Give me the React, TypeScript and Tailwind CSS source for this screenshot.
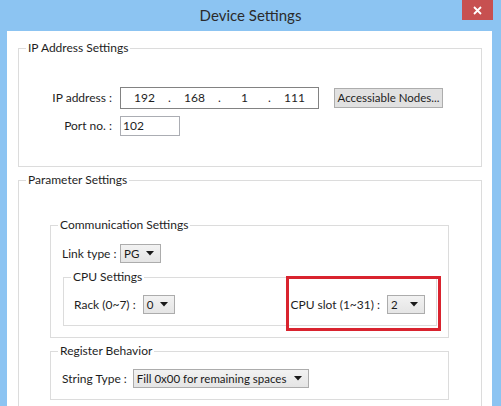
import React from "react";

// ─── Small pieces ─────────────────────────────────────────────────────────────
const font = "font-['Lato','Noto_Sans',sans-serif]";

function Arrow() {
  return (
    <svg width="8" height="5" viewBox="0 0 8 5" className="shrink-0">
      <path d="M0 0 H8 L4 4.5 Z" fill="#1a1a1a" />
    </svg>
  );
}

function Combo({ value, width }: { value: string; width: string }) {
  return (
    <div
      className={`flex h-[19px] items-center justify-between whitespace-nowrap border border-[#acacac] bg-gradient-to-b from-[#f2f2f2] to-[#e5e5e5] pl-[3px] pr-[6px] text-[11.5px] leading-none text-[#1a1a1a] ${width}`}
    >
      <span>{value}</span>
      <Arrow />
    </div>
  );
}

function Label({ children, className }: { children: React.ReactNode; className?: string }) {
  return (
    <span className={`whitespace-nowrap text-[12px] text-[#1e1e1e] ${className ?? ""}`}>{children}</span>
  );
}

function Group({
  title,
  className,
  children,
}: {
  title: string;
  className?: string;
  children: React.ReactNode;
}) {
  return (
    <fieldset className={`border border-[#dcdcdc] ${className ?? ""}`}>
      <legend className="ml-[7px] h-[16px] whitespace-nowrap px-[2px] text-[12px] leading-[16px] text-[#1e1e1e]">
        {title}
      </legend>
      {children}
    </fieldset>
  );
}

// ─── Main dialog ──────────────────────────────────────────────────────────────
export default function App() {
  const octets = ["192", "168", "1", "111"];

  return (
    <div className={`relative h-[406px] w-[501px] overflow-hidden bg-[#8cc4f2] ${font}`}>
      {/* title bar */}
      <div className="relative flex h-[31px] items-center justify-center">
        <span className="text-[15px] leading-none text-[#2b2b2b]">Device Settings</span>
        <div className="absolute right-[8px] top-0 flex h-[20px] w-[31px] items-center justify-center bg-[#c75050]">
          <svg width="9" height="9" viewBox="0 0 9 9">
            <path d="M1 1 L8 8 M8 1 L1 8" stroke="#fff" strokeWidth="1.8" />
          </svg>
        </div>
      </div>

      {/* client area */}
      <div className="ml-[7px] mr-[9px] h-[400px] bg-white pt-[9px]">
        <Group title="IP Address Settings" className="ml-[11px] mr-[10px] pb-[30px] pt-[31px]">
          <div className="flex items-center">
            <Label className="w-[94px] pr-[1px] text-right">IP address :</Label>
            <div className="ml-[7px] flex h-[22px] items-center border border-[#828282] text-[12px] text-[#1e1e1e]">
              {octets.map((o, i) => (
                <React.Fragment key={i}>
                  {i > 0 && <span className="w-[3px] text-center">.</span>}
                  <span className="w-[47px] text-center">{o}</span>
                </React.Fragment>
              ))}
            </div>
            <button className="ml-[15px] h-[20px] w-[109px] whitespace-nowrap border border-[#adadad] bg-[#e1e1e1] text-[11.5px] leading-none text-[#1e1e1e]">
              Accessiable Nodes...
            </button>
          </div>
          <div className="mt-[7px] flex items-center">
            <Label className="w-[94px] pr-[1px] text-right">Port no. :</Label>
            <div className="ml-[7px] flex h-[20px] w-[60px] items-center border border-[#abadb3] pl-[2px] text-[12px] text-[#1e1e1e]">
              102
            </div>
          </div>
        </Group>

        <Group title="Parameter Settings" className="ml-[11px] mr-[10px] mt-[5px] pb-[20px]">
          <Group title="Communication Settings" className="ml-[31px] mr-[32px] mt-[29px] pb-[11px]">
            <div className="flex items-center pl-[11px] pt-[11px]">
              <Label className="w-[58px]">Link type :</Label>
              <Combo value="PG" width="w-[41px]" />
            </div>
            <Group title="CPU Settings" className="ml-[12px] mr-[11px] mt-[6px] pb-[11px]">
              <div className="flex items-center justify-between pl-[10px] pr-[11px] pt-[10px]">
                <div className="flex items-center">
                  <Label>Rack (0~7) :</Label>
                  <div className="ml-[7px]">
                    <Combo value="0" width="w-[32px]" />
                  </div>
                </div>
                <div className="flex items-center">
                  <Label>CPU slot (1~31) :</Label>
                  <div className="ml-[7px]">
                    <Combo value="2" width="w-[38px]" />
                  </div>
                </div>
              </div>
            </Group>
          </Group>

          <Group title="Register Behavior" className="ml-[31px] mr-[32px] mt-[5px] pb-[11px]">
            <div className="flex items-center pl-[11px] pt-[10px]">
              <Label>String Type :</Label>
              <div className="ml-[6px]">
                <Combo value="Fill 0x00 for remaining spaces" width="w-[176px]" />
              </div>
            </div>
          </Group>
        </Group>
      </div>

      {/* red highlight annotation */}
      <div className="absolute left-[286px] top-[276px] h-[55px] w-[155px] border-[3px] border-[#d9232e]" />
    </div>
  );
}
